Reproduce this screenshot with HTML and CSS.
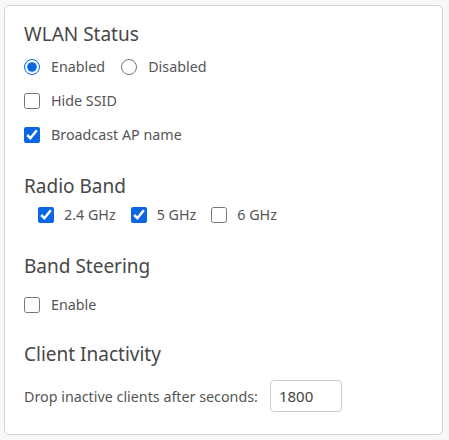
FILE: index.html
```html
<!DOCTYPE html>
<html lang="en">
<head>
<meta charset="utf-8">
<title>WLAN Settings</title>
<link rel="stylesheet" href="styles.css">
</head>
<body>
<div class="card">
  <section class="group">
    <h3 class="title">WLAN Status</h3>
    <div class="row first">
      <label class="opt"><input type="radio" name="wlan" checked><span>Enabled</span></label>
      <label class="opt"><input type="radio" name="wlan"><span>Disabled</span></label>
    </div>
    <div class="row">
      <label class="opt"><input type="checkbox"><span>Hide SSID</span></label>
    </div>
    <div class="row">
      <label class="opt"><input type="checkbox" checked><span>Broadcast AP name</span></label>
    </div>
  </section>
  <section class="group">
    <h3 class="title">Radio Band</h3>
    <div class="row bands">
      <label class="opt"><input type="checkbox" checked><span>2.4 GHz</span></label>
      <label class="opt"><input type="checkbox" checked><span>5 GHz</span></label>
      <label class="opt"><input type="checkbox"><span>6 GHz</span></label>
    </div>
  </section>
  <section class="group">
    <h3 class="title">Band Steering</h3>
    <div class="row steer">
      <label class="opt"><input type="checkbox"><span>Enable</span></label>
    </div>
  </section>
  <section class="group last">
    <h3 class="title">Client Inactivity</h3>
    <div class="row field">
      <label for="drop" class="field-label">Drop inactive clients after seconds:</label>
      <input id="drop" class="num" type="text" value="1800">
    </div>
  </section>
</div>
</body>
</html>
```
FILE: styles.css
```css
html, body {
  background: #f7f7f7;
}
body {
  margin: 5px 6px 4px 4px;
  font-family: "Noto Sans", "Open Sans", sans-serif;
  color: #555;
}
.card {
  background: #fff;
  border: 1px solid #d4d4d4;
  border-radius: 5px;
  height: 430px;
  box-sizing: border-box;
  padding: 16px 19px;
}
.group + .group {
  margin-top: 28px;
}
.group.last {
  margin-top: 26px;
}
.title {
  margin: 0;
  font-size: 19px;
  line-height: 24px;
  font-weight: 400;
  color: #474747;
}
.row {
  display: flex;
  align-items: center;
  gap: 16px;
  height: 22px;
  margin-top: 12px;
}
.row.first {
  margin-top: 10px;
}
.opt {
  display: flex;
  align-items: center;
  gap: 11px;
  font-size: 14.3px;
  line-height: 22px;
}
.opt input {
  margin: 0;
  width: 16px;
  height: 16px;
  accent-color: #0a66e4;
}
.bands {
  margin-top: 6px;
  padding-left: 14px;
  gap: 15px;
}
.bands .opt {
  gap: 10px;
}
.steer {
  margin-top: 16px;
}
.field {
  height: 32px;
  gap: 12px;
  margin-top: 14px;
}
.field-label {
  font-size: 14.3px;
}
.num {
  width: 72px;
  height: 32px;
  box-sizing: border-box;
  border: 1px solid #ccc;
  border-radius: 4px;
  padding: 0 8px;
  font-family: "Noto Sans", sans-serif;
  font-size: 15px;
  color: #444;
}
```
